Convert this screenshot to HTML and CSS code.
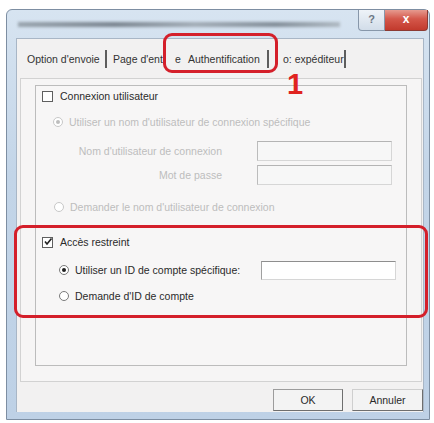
FILE: index.html
```html
<!DOCTYPE html>
<html lang="fr">
<head>
<meta charset="utf-8">
<title>Authentification</title>
<link rel="stylesheet" href="styles.css">
</head>
<body>
<div class="window">
  <div class="titlebar">
    <div class="title-blur"></div>
    <div class="btn-help">?</div>
    <div class="btn-close">x</div>
  </div>
  <div class="client">
    <div class="tabs">
      <span class="tab tab-1">Option d'envoie</span>
      <span class="sep"></span>
      <span class="tab tab-2">Page d'ent</span>
      <span class="tab tab-2b">e</span>
      <span class="tab tab-3">Authentification</span>
      <span class="sep"></span>
      <span class="tab tab-4">o: expéditeur</span>
      <span class="sep"></span>
    </div>
    <div class="panel">
      <div class="group">
        <div class="row r1"><span class="check"></span><span class="lbl">Connexion utilisateur</span></div>
        <div class="row r2 disabled"><span class="radio dot dis"></span><span class="lbl">Utiliser un nom d'utilisateur de connexion spécifique</span></div>
        <div class="row r3 disabled"><span class="field-lbl">Nom d'utilisateur de connexion</span><span class="input dis-input"></span></div>
        <div class="row r4 disabled"><span class="field-lbl">Mot de passe</span><span class="input dis-input"></span></div>
        <div class="row r5 disabled"><span class="radio dis"></span><span class="lbl">Demander le nom d'utilisateur de connexion</span></div>
        <div class="row r6"><span class="check checked"><svg viewBox="0 0 10 10" width="10" height="10"><path d="M2 4.5 L4 7 L8.5 1.5" fill="none" stroke="#222" stroke-width="1.6"/></svg></span><span class="lbl">Accès restreint</span></div>
        <div class="row r7"><span class="radio dot"></span><span class="lbl lbl-id">Utiliser un ID de compte spécifique:</span><span class="input"></span></div>
        <div class="row r8"><span class="radio"></span><span class="lbl">Demande d'ID de compte</span></div>
      </div>
    </div>
    <div class="buttons">
      <button class="btn">OK</button>
      <button class="btn btn-cancel">Annuler</button>
    </div>
  </div>
  <div class="hl hl-tab"></div>
  <div class="hl hl-group"></div>
  <div class="step">1</div>
</div>
</body>
</html>
```

FILE: styles.css
```css
* { box-sizing: border-box; }
html, body { margin: 0; padding: 0; background: #ffffff; }
body {
  font-family: "Liberation Sans", Arial, sans-serif;
  font-size: 10.5px;
  color: #2a2a2a;
}
.window {
  position: relative;
  margin: 9px 0 0 6px;
  width: 424px;
  height: 411px;
  border: 1px solid #7d8ea2;
  border-radius: 6px 6px 0 0;
  background: linear-gradient(#d7e4f1, #c3d5e8 40%, #bed1e6);
}
.titlebar {
  display: flex;
  align-items: flex-start;
  height: 28px;
}
.title-blur {
  margin: 12px 0 0 11px;
  width: 322px;
  height: 5px;
  background: linear-gradient(90deg, #8a949d, #646e78 30%, #959ea7 55%, #6d7882 80%, #a5aeb6);
  filter: blur(1.4px);
  opacity: 0.8;
}
.btn-help {
  margin-left: 18px;
  width: 27px;
  height: 21px;
  border: 1px solid #8797aa;
  border-top: none;
  border-radius: 0 0 0 4px;
  background: linear-gradient(#eef3f8, #d2dde9);
  color: #6c7784;
  font-size: 11px;
  font-weight: bold;
  text-align: center;
  line-height: 19px;
}
.btn-close {
  width: 43px;
  height: 21px;
  border: 1px solid #8c3a33;
  border-top: none;
  border-left: none;
  border-radius: 0 0 4px 0;
  background: linear-gradient(#e69a8f, #d4574a 45%, #c23a2d);
  color: #ffffff;
  font-size: 12px;
  font-weight: bold;
  text-align: center;
  line-height: 18px;
}
.client {
  margin: 0 5px 0 9px;
  height: 374px;
  background: #f2f1f1;
  border: 1px solid #a8b6c6;
  border-bottom: none;
  display: flex;
  flex-direction: column;
}
.tabs {
  display: flex;
  align-items: center;
  height: 39px;
  padding: 0 0 0 10px;
  white-space: nowrap;
  color: #333;
}
.tab { display: block; }
.tab-1 { width: 78px; }
.sep {
  display: block;
  width: 2px;
  height: 18px;
  background: #5d5d5d;
}
.tab-2 { margin-left: 6px; width: 56px; }
.tab-2b { margin-left: 6px; width: 13px; }
.tab-3 { width: 79px; }
.tab-4 { margin-left: 14px; width: 61px; }
.panel {
  margin: 0 1px 0 3px;
  height: 304px;
  border: 1px solid #d2d2d2;
  background: #f6f5f5;
  padding: 6px 14px 0 14px;
}
.group {
  height: 281px;
  border: 1px solid #bcbcbc;
  background: #f7f6f6;
  padding: 0 0 0 6px;
}
.row {
  display: flex;
  align-items: center;
  height: 20px;
  white-space: nowrap;
}
.r1 { margin-top: 0; }
.r2 { margin-top: 6px; padding-left: 11px; }
.r3 { margin-top: 9px; }
.r4 { margin-top: 4px; }
.r5 { margin-top: 12px; padding-left: 12px; }
.r6 { margin-top: 15px; }
.r7 { margin-top: 8px; padding-left: 17px; }
.r8 { margin-top: 6px; padding-left: 17px; }
.disabled { color: #bdbdbd; }
.check {
  display: block;
  width: 11px;
  height: 11px;
  border: 1px solid #5f5f5f;
  background: #ffffff;
  margin-right: 7px;
}
.check svg { display: block; margin: -0.5px 0 0 -0.5px; }
.radio {
  display: block;
  position: relative;
  width: 10px;
  height: 10px;
  border: 1px solid #7a7a7a;
  border-radius: 50%;
  background: #ffffff;
  margin-right: 6px;
}
.radio.dot::after {
  content: "";
  position: absolute;
  left: 2px;
  top: 2px;
  width: 4px;
  height: 4px;
  border-radius: 50%;
  background: #1f1f1f;
}
.radio.dis { border-color: #c8c8c8; }
.radio.dis.dot::after { background: #bdbdbd; }
.field-lbl {
  display: block;
  width: 180px;
  text-align: right;
}
.input {
  display: block;
  margin-left: 35px;
  width: 135px;
  height: 20px;
  border: 1px solid #d6d6d6;
  border-top-color: #8e8e8e;
  border-left-color: #a0a0a0;
  background: #ffffff;
}
.dis-input { background: #f7f7f7; border-top-color: #b4b4b4; border-left-color: #bcbcbc; }
.lbl-id { width: 186px; }
.r7 .input { margin-left: 0; height: 19px; }
.buttons {
  display: flex;
  justify-content: flex-end;
  gap: 9px;
  padding: 7px 0 0 0;
}
.btn {
  width: 70px;
  height: 22px;
  padding: 0;
  font-family: "Liberation Sans", Arial, sans-serif;
  font-size: 10.5px;
  color: #2a2a2a;
  background: #f3f3f3;
  border: 1px solid #9c9c9c;
  border-right-color: #6e6e6e;
  border-bottom-color: #6e6e6e;
}
.btn-cancel { width: 71px; border-top-color: #cfcfcf; border-left-color: #cfcfcf; }
.hl {
  position: absolute;
  border: 3px solid #d41f2a;
  border-radius: 9px;
}
.hl-tab {
  left: 156px;
  top: 23px;
  width: 115px;
  height: 40px;
  background: rgba(246, 245, 245, 0);
}
.hl-group {
  left: 7px;
  top: 215px;
  width: 414px;
  height: 93px;
}
.step {
  position: absolute;
  left: 280px;
  top: 60px;
  font-family: "Liberation Sans", Arial, sans-serif;
  font-weight: bold;
  font-size: 29px;
  line-height: 29px;
  color: #e0231f;
}
```
